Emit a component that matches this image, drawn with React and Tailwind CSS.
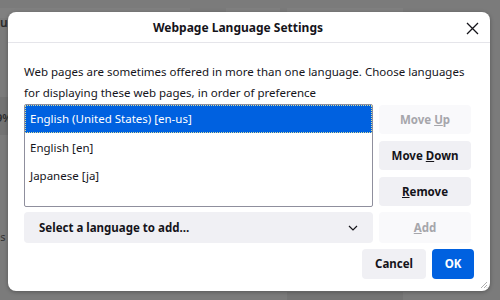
export default function App() {
  const font = { fontFamily: '"Noto Sans", "Open Sans", sans-serif' };
  return (
    <div className="relative w-[500px] h-[300px] overflow-hidden bg-[#7b7b7b]" style={font}>
      {/* dimmed background page */}
      <div className="absolute left-0 top-[8px] w-[190px] h-[10px] bg-[#808080]" />
      <div className="absolute left-[226px] top-[8px] w-[54px] h-[10px] bg-[#808080]" />
      <div className="absolute left-[287px] top-[8px] w-[116px] h-[10px] bg-[#808080]" />
      <div className="absolute left-0 top-[14px] text-[12px] font-semibold text-[#2a2a2a]">u</div>
      <div className="absolute left-0 top-[97px] w-[10px] h-[38px] bg-[#737373]" />
      <div className="absolute left-[-4px] top-[110px] text-[11px] font-semibold text-[#2a2a2a]">9%</div>
      <div className="absolute left-[-6px] top-[229px] text-[11px] text-[#333]">es</div>
      <div className="absolute left-[287px] top-[292px] w-[116px] h-[8px] bg-[#747474]" />

      {/* dialog */}
      <div className="absolute left-[8px] top-[12px] w-[482px] h-[279px] bg-white rounded-[8px] shadow-[0_1px_4px_rgba(0,0,0,0.3)] flex flex-col">
        <div className="h-[31px] border-b border-[#e5e5ea] flex items-center justify-center relative pr-[22px]">
          <span className="text-[12px] font-bold text-[#15141a] mt-[2px]">Webpage Language Settings</span>
          <svg className="absolute right-[11px] top-[10px]" width="13" height="13" viewBox="0 0 13 13">
            <path d="M1 1L12 12M12 1L1 12" stroke="#15141a" strokeWidth="1.3" />
          </svg>
        </div>
        <div className="px-[16px] pt-[18px] flex flex-col">
          <p className="text-[11.5px] leading-[21px] text-[#15141a]">
            Web pages are sometimes offered in more than one language. Choose languages for displaying these web pages, in order of preference
          </p>
          <div className="mt-[1px] flex gap-[6px]">
            <div className="w-[349px] h-[103px] border border-[#8f8f9d] rounded-[2px] flex flex-col text-[11.5px] text-[#15141a]">
              <div className="h-[28px] bg-[#0061e0] text-white border border-dotted border-[#d7dd9a] flex items-center pl-[4px]">English (United States) [en-us]</div>
              <div className="h-[29px] flex items-center pl-[5px]">English [en]</div>
              <div className="h-[28px] flex items-center pl-[5px]">Japanese [ja]</div>
            </div>
            <div className="flex flex-col gap-[7px] pt-[1px]">
              <button className="w-[92px] h-[29px] rounded-[4px] bg-[#f9f9fb] text-[#a6a6ab] text-[11.5px] font-bold">Move <span className="underline">U</span>p</button>
              <button className="w-[92px] h-[29px] rounded-[4px] bg-[#f0f0f4] text-[#15141a] text-[11.5px] font-bold">Move <span className="underline">D</span>own</button>
              <button className="w-[92px] h-[29px] rounded-[4px] bg-[#f0f0f4] text-[#15141a] text-[11.5px] font-bold"><span className="underline">R</span>emove</button>
            </div>
          </div>
          <div className="mt-[5px] flex gap-[6px]">
            <div className="w-[349px] h-[31px] rounded-[4px] bg-[#f0f0f4] flex items-center justify-between pl-[15px] pr-[15px]">
              <span className="text-[11.5px] font-bold text-[#15141a]">Select a language to add…</span>
              <svg width="10" height="6" viewBox="0 0 10 6">
                <path d="M1 1L5 5L9 1" stroke="#15141a" strokeWidth="1.2" fill="none" />
              </svg>
            </div>
            <button className="w-[92px] h-[31px] rounded-[4px] bg-[#f9f9fb] text-[#a6a6ab] text-[11.5px] font-bold"><span className="underline">A</span>dd</button>
          </div>
          <div className="mt-[6px] flex justify-end gap-[6px] pr-[0px]">
            <button className="w-[64px] h-[30px] rounded-[4px] bg-[#f0f0f4] text-[#15141a] text-[11.5px] font-bold">Cancel</button>
            <button className="w-[42px] h-[30px] rounded-[4px] bg-[#0061e0] text-white text-[11.5px] font-bold">OK</button>
          </div>
        </div>
        <svg className="absolute right-[2px] bottom-[2px]" width="8" height="8" viewBox="0 0 8 8">
          <path d="M7 1L1 7M7 4L4 7M7 6.5L6.5 7" stroke="#9a9a9a" strokeWidth="0.8" />
        </svg>
      </div>
    </div>
  );
}
